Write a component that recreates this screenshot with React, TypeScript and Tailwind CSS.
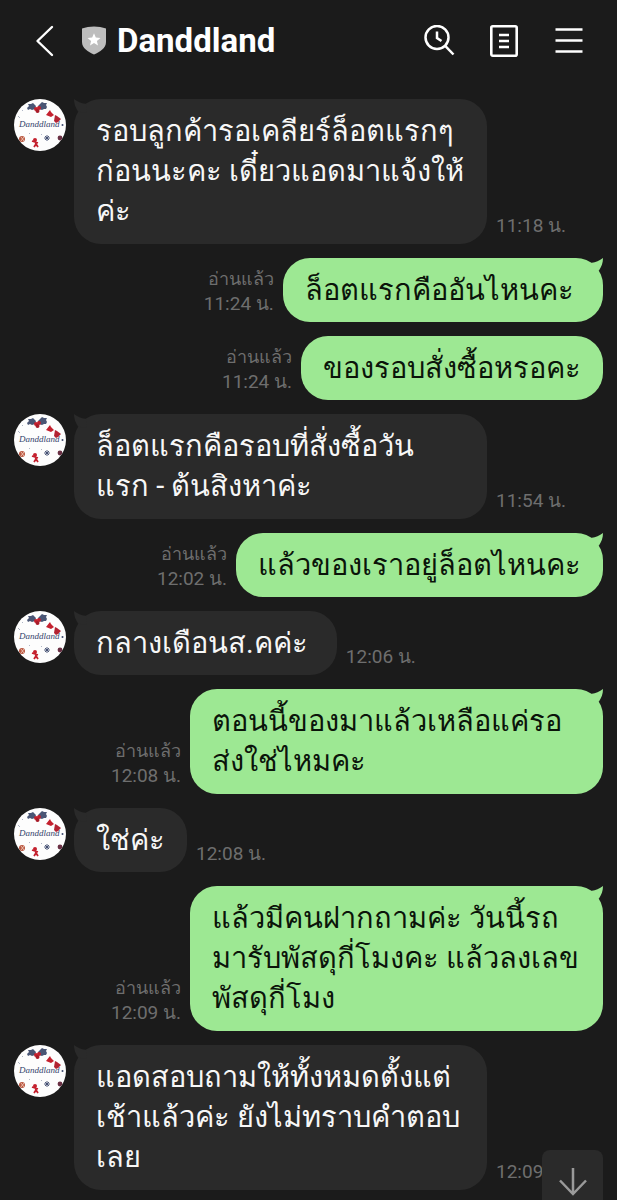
import React from 'react';
import clsx from 'clsx';

// --- DATA ---
type Message = {
  id: number;
  from: 'shop' | 'me';
  lines: string[];
  time: string;
  tail?: boolean;
};

// trailing spaces are kept as the sender typed them
const messages: Message[] = [
  { id: 1, from: 'shop', lines: ['รอบลูกค้ารอเคลียร์ล็อตแรกๆ', 'ก่อนนะคะ เดี๋ยวแอดมาแจ้งให้', 'ค่ะ'], time: '11:18 น.', tail: true },
  { id: 2, from: 'me', lines: ['ล็อตแรกคืออันไหนคะ '], time: '11:24 น.', tail: true },
  { id: 3, from: 'me', lines: ['ของรอบสั่งซื้อหรอคะ'], time: '11:24 น.' },
  { id: 4, from: 'shop', lines: ['ล็อตแรกคือรอบที่สั่งซื้อวัน', 'แรก - ต้นสิงหาค่ะ'], time: '11:54 น.', tail: true },
  { id: 5, from: 'me', lines: ['แล้วของเราอยู่ล็อตไหนคะ'], time: '12:02 น.', tail: true },
  { id: 6, from: 'shop', lines: ['กลางเดือนส.คค่ะ '], time: '12:06 น.', tail: true },
  { id: 7, from: 'me', lines: ['ตอนนี้ของมาแล้วเหลือแค่รอ', 'ส่งใช่ไหมคะ'], time: '12:08 น.', tail: true },
  { id: 8, from: 'shop', lines: ['ใช่ค่ะ'], time: '12:08 น.', tail: true },
  { id: 9, from: 'me', lines: ['แล้วมีคนฝากถามค่ะ วันนี้รถ', 'มารับพัสดุกี่โมงคะ แล้วลงเลข', 'พัสดุกี่โมง'], time: '12:09 น.', tail: true },
  { id: 10, from: 'shop', lines: ['แอดสอบถามให้ทั้งหมดตั้งแต่', 'เช้าแล้วค่ะ ยังไม่ทราบคำตอบ', 'เลย'], time: '12:09 น.', tail: true },
];

const Avatar = () => (
  <svg viewBox="0 0 52 52" className="size-[52px] shrink-0" role="img" aria-label="Danddland">
    <clipPath id="face">
      <circle cx="26" cy="26" r="26" />
    </clipPath>
    <g clipPath="url(#face)">
      <rect width="52" height="52" fill="#fdfdfd" />
      {/* holly */}
      <path d="M13 9l2-2-1-2 3 0 2-1 3 3-1 3-3 1-2-1-2 1zM33 8l-1-2 1-2-3 0-2-1-4 4 1 3 3 1 2-1 2 0z" fill="#4a5675" />
      <circle cx="22" cy="10" r="2" fill="#c4202e" />
      <circle cx="25" cy="9" r="2" fill="#c4202e" />
      <circle cx="23.500" cy="12" r="2" fill="#a81b28" />
      {/* bells */}
      <path d="M32 16l4-5 1 2 3 3-3 2z" fill="#c4202e" />
      <path d="M40 22l1-6 2 1 4 3-3 3-2 1z" fill="#b32332" />
      <circle cx="48.500" cy="26" r="1" fill="#3d4a6e" />
      <text x="5" y="28" fontFamily="'Liberation Serif', serif" fontStyle="italic" fontSize="9" fill="#34456c">Danddland</text>
      {/* gingerbread, snowflake, sweets */}
      <circle cx="8" cy="40" r="3" fill="#b9563f" />
      <path d="M7 38l3 4M10 38l-3 4" stroke="#f2d2c4" strokeWidth="0.800" />
      <circle cx="21" cy="41" r="2" fill="#c4202e" />
      <path d="M18 42l6 2M21 42l1 3-2 3M22 45l2 3" stroke="#c4202e" strokeWidth="1.800" fill="none" />
      <path d="M33 36v6M30 39h6M31 37l4 4M35 37l-4 4" stroke="#3d4a6e" strokeWidth="0.900" />
      <circle cx="46" cy="39" r="2.400" fill="#6a3044" />
      <path d="M4 17l2 2M8 11l1 1M15 34l1 1M27 35l1 1" stroke="#9aa3b8" strokeWidth="0.800" />
    </g>
  </svg>
);

const Bubble = ({ message }: { message: Message }) => {
  const mine = message.from === 'me';
  const long = message.lines.length > 1;
  return (
    <div
      className={clsx(
        'relative rounded-[27px] px-[22px] pt-3 text-[29px] leading-[40px] whitespace-pre',
        long ? 'w-[413px] pb-[13px]' : 'pb-3',
        mine ? 'bg-[#9de893] text-[#0b140a]' : 'bg-[#2a2a2a] text-[#f7f7f7]'
      )}
    >
      {message.tail && (
        <svg
          viewBox="0 0 26 26"
          aria-hidden="true"
          className={clsx('absolute top-0 size-[26px]', mine ? 'right-0 text-[#9de893]' : 'left-0 -scale-x-100 text-[#2a2a2a]')}
        >
          <path d="M13 4.500C17 5.500 22 3 26 0C26 5 24.500 8.500 22 12.500L14 14Z" fill="currentColor" />
        </svg>
      )}
      {message.lines.map((line) => (
        <p key={line} className="relative">{line}</p>
      ))}
    </div>
  );
};

const Row = ({ message }: { message: Message }) => {
  const mine = message.from === 'me';
  return (
    <li className={clsx('flex gap-[9px]', mine && 'justify-end')}>
      {!mine && (
        <div className="flex gap-2">
          <Avatar />
          <Bubble message={message} />
        </div>
      )}
      <div className={clsx('self-end pb-[6px] leading-[25px] whitespace-nowrap text-[#6e6e6e]', mine && 'text-right')}>
        {mine && <p className="text-[18px] leading-[25px]">อ่านแล้ว</p>}
        <time className="block text-[19px] leading-[25px]">{message.time}</time>
      </div>
      {mine && <Bubble message={message} />}
    </li>
  );
};

const App = () => {
  return (
    <div className="min-h-screen overflow-hidden bg-[#1b1b1b] font-[Roboto,sans-serif]">
      {/* HEADER */}
      <header className="flex h-[82px] items-center pr-8 pl-[35px]">
        <button aria-label="Back" className="mr-[26px]">
          <svg viewBox="0 0 20 32" className="h-8 w-5" fill="none" stroke="#fff" strokeWidth="2.400" strokeLinecap="round" strokeLinejoin="round">
            <path d="M17 2L2.500 16L17 30" />
          </svg>
        </button>
        <svg viewBox="0 0 26 30" className="mr-[10px] h-[30px] w-[26px]" aria-hidden="true">
          <path d="M13 0.500C17 0.500 21.500 1.300 25 2.500V16C25 22 19 26 13 28.500C7 26 1 22 1 16V2.500C4.500 1.300 9 0.500 13 0.500Z" fill="#bdbdbd" />
          <path d="M13 7.200l1.800 4.300 4.700.4-3.600 3 1.100 4.600-4-2.500-4 2.500 1.100-4.600-3.600-3 4.700-.4z" fill="#fff" />
        </svg>
        <h1 className="text-[33px] font-bold text-white">Danddland</h1>
        <nav className="ml-auto flex items-center gap-[33px]">
          <button aria-label="Search">
            <svg viewBox="0 0 32 32" className="size-8" fill="none" stroke="#fff" strokeWidth="2.500">
              <circle cx="14" cy="12.500" r="11.500" />
              <path d="M22.200 20.800L30.500 29.500" />
              <path d="M14 6.500V13l4.500 3" />
            </svg>
          </button>
          <button aria-label="Notes">
            <svg viewBox="0 0 32 32" className="size-8" fill="none" stroke="#fff" strokeWidth="2.600">
              <rect x="3.300" y="1.300" width="25.400" height="29.400" rx="1.500" />
              <path d="M11 10h10M11 16h10M11 22h10" />
            </svg>
          </button>
          <button aria-label="Menu">
            <svg viewBox="0 0 32 32" className="size-8" fill="none" stroke="#fff" strokeWidth="2.600">
              <path d="M2.500 4.500h27M2.500 15.500h27M2.500 26.500h27" />
            </svg>
          </button>
        </nav>
      </header>

      {/* CHAT */}
      <main className="px-[14px] pt-[17px]">
        <ul className="flex flex-col gap-[14px]">
          {messages.map((message) => (
            <Row key={message.id} message={message} />
          ))}
        </ul>
      </main>

      <button
        aria-label="Scroll to latest"
        className="fixed right-[14px] bottom-0 flex h-[50px] w-[61px] items-end justify-center rounded-t-[8px] bg-[#2a2a2a] pb-1"
      >
        <svg viewBox="0 0 28 28" className="size-7" fill="none" stroke="#9a9a9a" strokeWidth="2.500">
          <path d="M14 0v26M1 12.500L14 26l13-13.500" />
        </svg>
      </button>
    </div>
  );
};

export default App;
